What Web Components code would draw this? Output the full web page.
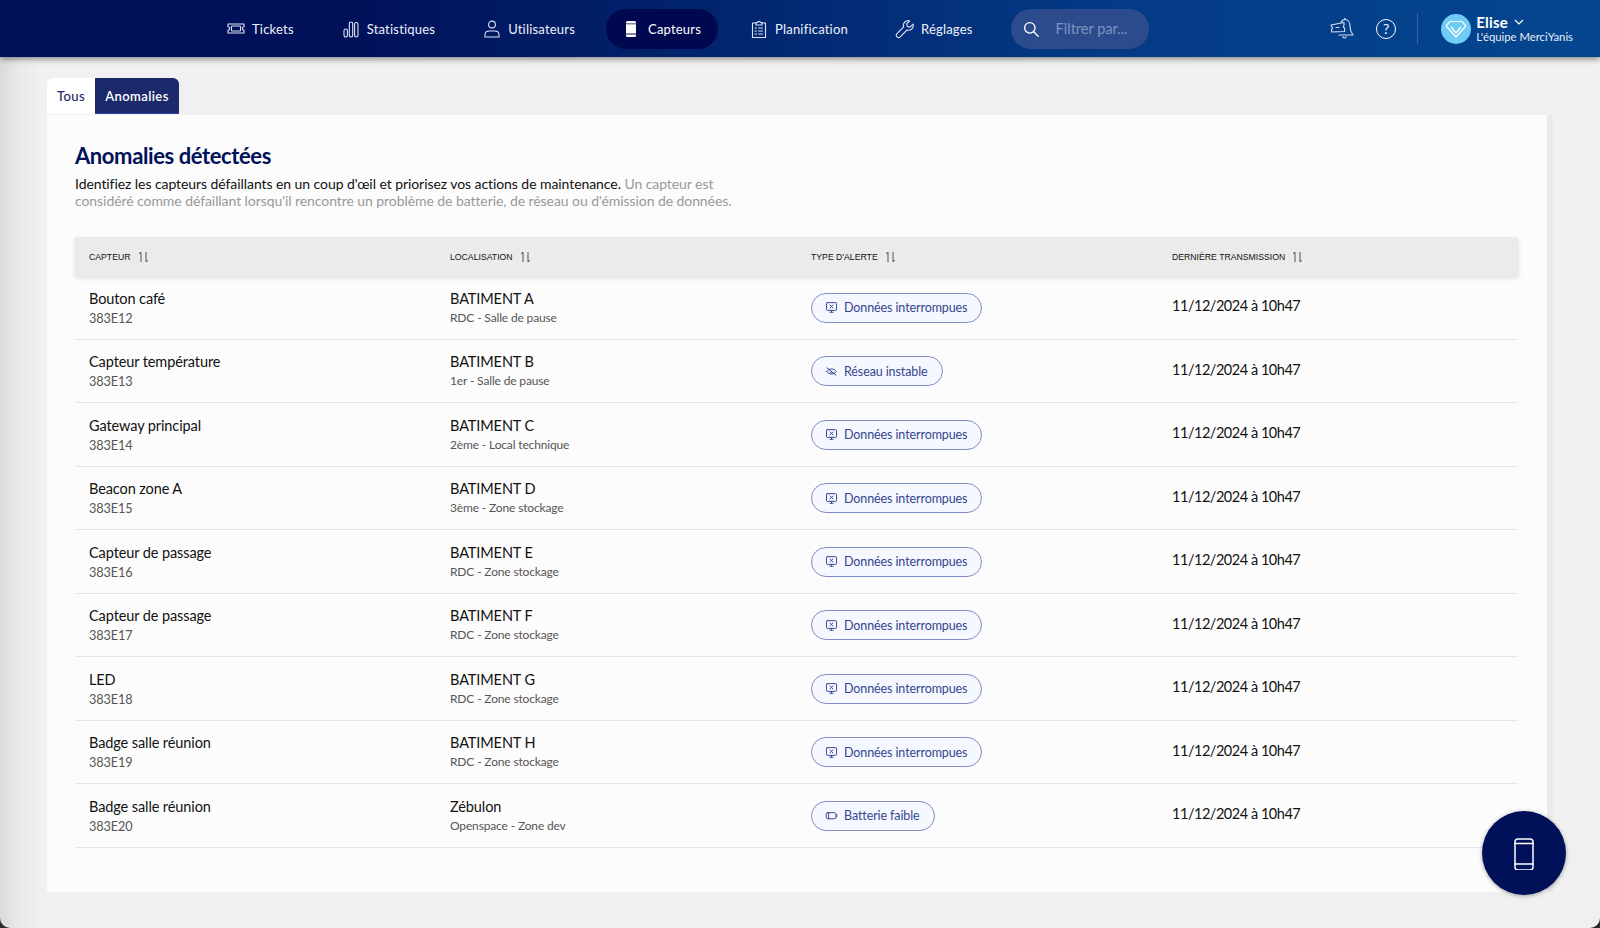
<!DOCTYPE html>
<html lang="fr"><head><meta charset="utf-8"><title>Anomalies détectées</title>
<style>
html,body{margin:0;padding:0;height:100%;background:#2a2a2a;overflow:hidden}
body{font-family:Lato,"Open Sans",sans-serif}
</style></head><body>
<app-shell></app-shell>
<script>
const ICONS={
tickets:'<path d="M2 4.500h16v2.800a1.700 1.700 0 0 0 0 3.400v2.800H2v-2.800a1.700 1.700 0 0 0 0-3.400z" transform="translate(0 .5)"/><rect x="5.500" y="7" width="9" height="5" rx=".6"/>',
stats:'<rect x="3" y="10" width="3.400" height="8" rx="1.700"/><rect x="8.300" y="3" width="3.400" height="15" rx="1.700"/><rect x="13.600" y="3.500" width="3.400" height="14.500" rx="1.700"/>',
user:'<circle cx="10" cy="5.500" r="3.400"/><path d="M3 18v-2.200c0-2.400 1.800-3.800 4.200-3.800h5.600c2.400 0 4.200 1.400 4.200 3.800V18z"/>',
sensor:'<path fill="#fff" stroke="none" d="M6.500 2h7A1.500 1.500 0 0 1 15 3.500v1H5v-1A1.500 1.500 0 0 1 6.500 2zM5 5.200h10v9.400H5zM5 15.400h10v1.100a1.500 1.500 0 0 1-1.500 1.500h-7A1.500 1.500 0 0 1 5 16.500z"/>',
plan:'<path d="M7 4H3.500v14.500h13V4H13"/><path d="M7 6V3.500h1.700a1.300 1.300 0 0 1 2.600 0H13V6z"/><path d="M6 9h1.500M9.500 9h4M6 12h1.500M9.500 12h4M6 15h1.500M9.500 15h4"/>',
wrench:'<path d="M18 5.100l-3 3-2.600-.6-.7-2.600 3-3a4.700 4.700 0 0 0-6 6L2 14.600a2.200 2.200 0 0 0 3.200 3.200l6.800-6.800a4.700 4.700 0 0 0 6-5.900z"/>',
search:'<circle cx="8.700" cy="8.700" r="5.800"/><path d="M13 13l5 5"/>',
bell:'<path d="M11 5.500C12 3.500 13.500 2.500 15 2.500c3 0 5 3 5 7s1 6 3 8.500H9"/><path d="M14.800 2.500V1.200"/><path d="M12.800 19.800a1.800 1.800 0 0 0 3.400 0"/><path d="M1 8l13-2.500v3a1.200 1.200 0 0 0 .6 2.300v3.700l-13 .5v-3a1.300 1.300 0 0 0 0-2.500z" fill="#043a86"/><path d="M6 10.500h3"/>',
monitor:'<rect x="1.800" y="2" width="12.400" height="9.500" rx="1"/><path d="M6 13.800h4M8 11.500v2.300M6.200 4.800l3.600 3.800M9.800 4.800l-3.600 3.800"/>',
signal:'<path d="M2 8c3-4 8.500-4.500 12 0-3.500 4.500-9 4-12 0z"/><path d="M2.500 3.500l11 9M6 8.500c1 1.500 3 1.500 4 .5"/>',
battery:'<rect x="1.500" y="4.500" width="12" height="7.500" rx="2"/><path d="M14.500 7v2.500M4.500 4.500v7.500"/>',
phone:'<rect x="8" y="3" width="18" height="31" rx="3"/><path d="M8 7.500h18M8 28h18"/>'
};
function svg(name,size,color,sw,box){return `<svg width="${size}" height="${size}" viewBox="0 0 ${box||20} ${box||20}" fill="none" stroke="${color}" stroke-width="${sw}" stroke-linecap="round" stroke-linejoin="round" aria-hidden="true">${ICONS[name]}</svg>`}

class NavItem extends HTMLElement{connectedCallback(){
 this.attachShadow({mode:'open'}).innerHTML=`<style>
 :host{display:flex;align-items:center;height:40px;padding:0 16px;gap:6px;color:#eef1fa;font-size:13px;letter-spacing:.2px;border-radius:20px;white-space:nowrap}
 :host([active]){background:#00084f;color:#fff;padding:0 17px 0 15px;gap:7px}
 svg{flex:none;display:block}
 </style>${svg(this.getAttribute('icon'),20,'#dfe4f5',1.1)}<slot></slot>`;
}}
customElements.define('nav-item',NavItem);

class SearchBox extends HTMLElement{connectedCallback(){
 this.attachShadow({mode:'open'}).innerHTML=`<style>
 :host{display:flex;align-items:center;width:138px;height:40px;box-sizing:border-box;padding-left:11px;gap:16px;background:#2b4b8c;border-radius:20px;color:#8092c0;font-size:14.500px}
 svg{display:block;flex:none}
 </style>${svg('search',18,'#fff',1.5)}<span>Filtrer par...</span>`;
}}
customElements.define('search-box',SearchBox);

class UserMenu extends HTMLElement{connectedCallback(){
 this.attachShadow({mode:'open'}).innerHTML=`<style>
 :host{display:flex;align-items:center;gap:5px;color:#fff}
 .t{display:flex;flex-direction:column}
 .n{display:flex;align-items:center;gap:6px;font-size:15px;font-weight:700;line-height:15px;letter-spacing:.2px}
 .s{font-size:11.300px;line-height:13px;color:#e8ecf8}
 svg{display:block;flex:none}
 </style>
 <svg width="30" height="30" viewBox="0 0 30 30"><circle cx="15" cy="15" r="15" fill="#6fcdf5"/><path d="M9 7.500h12l4 4.500L15 23 5 12z" fill="none" stroke="#fff" stroke-width="1.200"/><path d="M10 13l5 6 5-6" fill="none" stroke="#fff" stroke-width="1.200"/></svg>
 <div class="t"><div class="n">Elise <svg width="10" height="6" viewBox="0 0 10 6" fill="none" stroke="#fff" stroke-width="1.200"><path d="M1 1l4 4 4-4"/></svg></div><div class="s">L'équipe MerciYanis</div></div>`;
}}
customElements.define('user-menu',UserMenu);

class TopNav extends HTMLElement{connectedCallback(){
 this.attachShadow({mode:'open'}).innerHTML=`<style>
 :host{display:flex;align-items:center;height:57px;flex:none;padding-left:210px;box-sizing:border-box;background:linear-gradient(90deg,#001159 0%,#001159 22%,#043a86 70%,#04478f 100%);box-shadow:0 2px 6px rgba(0,0,0,.45);position:relative;z-index:2}
 nav{display:flex;align-items:center;gap:15px}
 search-box{margin-left:7px}
 .tools{display:flex;align-items:center;margin-left:auto;padding-right:27px}
 .help{margin-left:22px;display:flex;align-items:center;justify-content:center;width:20px;height:20px;border:1.300px solid #fff;border-radius:50%;font-size:14px;font-weight:400;color:#fff;box-sizing:border-box}
 .div{width:1px;height:31px;background:#3f63a8;margin:0 23px 0 21px}
 svg{display:block}
 </style>
 <nav>
 <nav-item icon="tickets">Tickets</nav-item>
 <nav-item icon="stats">Statistiques</nav-item>
 <nav-item icon="user">Utilisateurs</nav-item>
 <nav-item icon="sensor" active>Capteurs</nav-item>
 <nav-item icon="plan">Planification</nav-item>
 <nav-item icon="wrench">Réglages</nav-item>
 <search-box></search-box>
 </nav>
 <div class="tools">${svg('bell',24,'#d8def2',1.1,24)}<span class="help">?</span><span class="div"></span><user-menu></user-menu></div>`;
}}
customElements.define('top-nav',TopNav);

class TabBar extends HTMLElement{connectedCallback(){
 this.attachShadow({mode:'open'}).innerHTML=`<style>
 :host{display:flex;height:36px;font-size:13px;letter-spacing:.4px;flex:none}
 span{display:flex;align-items:center;box-sizing:border-box}
 .a{background:#fff;color:#1c2a6b;width:48px;justify-content:center;border-radius:6px 0 0 0;font-weight:500}
 .b{background:#1c2a6b;color:#fff;width:84px;justify-content:center;border-radius:0 6px 0 0;border-bottom:1px solid #2d47a8;font-weight:600}
 </style><span class="a">Tous</span><span class="b">Anomalies</span>`;
}}
customElements.define('tab-bar',TabBar);

class AlertPill extends HTMLElement{connectedCallback(){
 this.attachShadow({mode:'open'}).innerHTML=`<style>
 :host{display:inline-flex;align-items:center;height:30px;box-sizing:border-box;padding:0 14px 0 13px;gap:6px;background:#f6f8ff;border:1px solid #7f8cc6;border-radius:15px;color:#34458f;font-size:12.500px;letter-spacing:-.1px;white-space:nowrap}
 svg{display:block;flex:none}
 </style>${svg(this.getAttribute('icon'),13,'#34458f',1.2,16)}<slot></slot>`;
}}
customElements.define('alert-pill',AlertPill);

const GRID='display:grid;grid-template-columns:repeat(4,361px);padding:0 0 0 14px;';
class SensorRow extends HTMLElement{connectedCallback(){
 const g=k=>this.getAttribute(k);
 this.attachShadow({mode:'open'}).innerHTML=`<style>
 :host{${GRID}height:63.500px;box-sizing:border-box;border-bottom:1.500px solid #e6e6e6;align-items:center;color:#111}
 .c{padding-top:1px}
 .n{font-size:14.500px;line-height:20px;letter-spacing:-.1px}
 .s{font-size:12px;line-height:18px;color:#555;letter-spacing:-.15px}
 .code{font-size:12.700px;letter-spacing:-.1px}
 .d{font-size:14.500px;margin-top:-3px;letter-spacing:-.47px}
 alert-pill{margin-top:1px}
 </style>
 <div class="c"><div class="n">${g('name')}</div><div class="s code">${g('code')}</div></div>
 <div class="c"><div class="n">${g('bat')}</div><div class="s">${g('loc')}</div></div>
 <div><alert-pill icon="${g('icon')}">${g('alert')}</alert-pill></div>
 <div class="d">11/12/2024 à 10h47</div>`;
}}
customElements.define('sensor-row',SensorRow);

class TableHead extends HTMLElement{connectedCallback(){
 const sort=`<svg width="11" height="12" viewBox="0 0 11 12" fill="none" stroke="#444" stroke-width=".9"><path d="M3 11V1L1 3M8 1v10l2-2"/></svg>`;
 this.attachShadow({mode:'open'}).innerHTML=`<style>
 :host{${GRID}height:39px;align-items:center;background:#ebebeb;box-shadow:0 2px 5px rgba(0,0,0,.12);font:8.700px "Liberation Sans",Arial,sans-serif;color:#111;text-transform:uppercase;position:relative}
 div{display:flex;align-items:center;gap:7px}
 svg{display:block}
 </style>
 <div>Capteur ${sort}</div><div>Localisation ${sort}</div><div>Type d'alerte ${sort}</div><div>Dernière transmission ${sort}</div>`;
}}
customElements.define('table-head',TableHead);

const ROWS=[
['Bouton café','383E12','BATIMENT A','RDC - Salle de pause','monitor','Données interrompues'],
['Capteur température','383E13','BATIMENT B','1er - Salle de pause','signal','Réseau instable'],
['Gateway principal','383E14','BATIMENT C','2ème - Local technique','monitor','Données interrompues'],
['Beacon zone A','383E15','BATIMENT D','3ème - Zone stockage','monitor','Données interrompues'],
['Capteur de passage','383E16','BATIMENT E','RDC - Zone stockage','monitor','Données interrompues'],
['Capteur de passage','383E17','BATIMENT F','RDC - Zone stockage','monitor','Données interrompues'],
['LED','383E18','BATIMENT G','RDC - Zone stockage','monitor','Données interrompues'],
['Badge salle réunion','383E19','BATIMENT H','RDC - Zone stockage','monitor','Données interrompues'],
['Badge salle réunion','383E20','Zébulon','Openspace - Zone dev','battery','Batterie faible']];

class AnomalyCard extends HTMLElement{connectedCallback(){
 const rows=ROWS.map(r=>`<sensor-row name="${r[0]}" code="${r[1]}" bat="${r[2]}" loc="${r[3]}" icon="${r[4]}" alert="${r[5]}"></sensor-row>`).join('');
 this.attachShadow({mode:'open'}).innerHTML=`<style>
 :host{display:block;width:1500px;height:777px;box-sizing:border-box;margin-top:1px;padding:27px 29px 0 28px;background:#fcfcfc;box-shadow:6px 0 0 #ebebeb}
 h1{margin:0;font-size:22px;line-height:28px;font-weight:700;color:#001159;letter-spacing:-.4px}
 p{margin:5px 0 0;font-size:14px;line-height:17px;color:#999;letter-spacing:-.07px;white-space:nowrap}
 b{font-weight:400;color:#111}
 table-head{margin-top:28px}
 </style>
 <h1>Anomalies détectées</h1>
 <p><b>Identifiez les capteurs défaillants en un coup d'œil et priorisez vos actions de maintenance.</b> <span>Un capteur est</span><br><span>considéré comme défaillant lorsqu'il rencontre un problème de batterie, de réseau ou d'émission de données.</span></p>
 <table-head></table-head>${rows}`;
}}
customElements.define('anomaly-card',AnomalyCard);

class PhoneFab extends HTMLElement{connectedCallback(){
 this.attachShadow({mode:'open'}).innerHTML=`<style>
 :host{position:absolute;left:1482px;top:811px;width:84px;height:84px;border-radius:50%;background:#001159;display:flex;align-items:center;justify-content:center;box-shadow:0 1px 4px rgba(0,0,0,.35)}
 svg{display:block}
 </style>${svg('phone',34,'#fff',1.5,34)}`;
}}
customElements.define('phone-fab',PhoneFab);

class AppShell extends HTMLElement{connectedCallback(){
 this.attachShadow({mode:'open'}).innerHTML=`<style>
 :host{display:flex;flex-direction:column;position:relative;width:1600px;height:928px;overflow:hidden;border-radius:0 0 10px 10px;background:linear-gradient(90deg,#dadada 0,#e9e9e9 18px,#f0f0f0 40px)}
 main{padding:21px 0 0 47px;display:flex;flex-direction:column}
 </style><top-nav></top-nav><main><tab-bar></tab-bar><anomaly-card></anomaly-card></main><phone-fab></phone-fab>`;
}}
customElements.define('app-shell',AppShell);
</script>
</body></html>
